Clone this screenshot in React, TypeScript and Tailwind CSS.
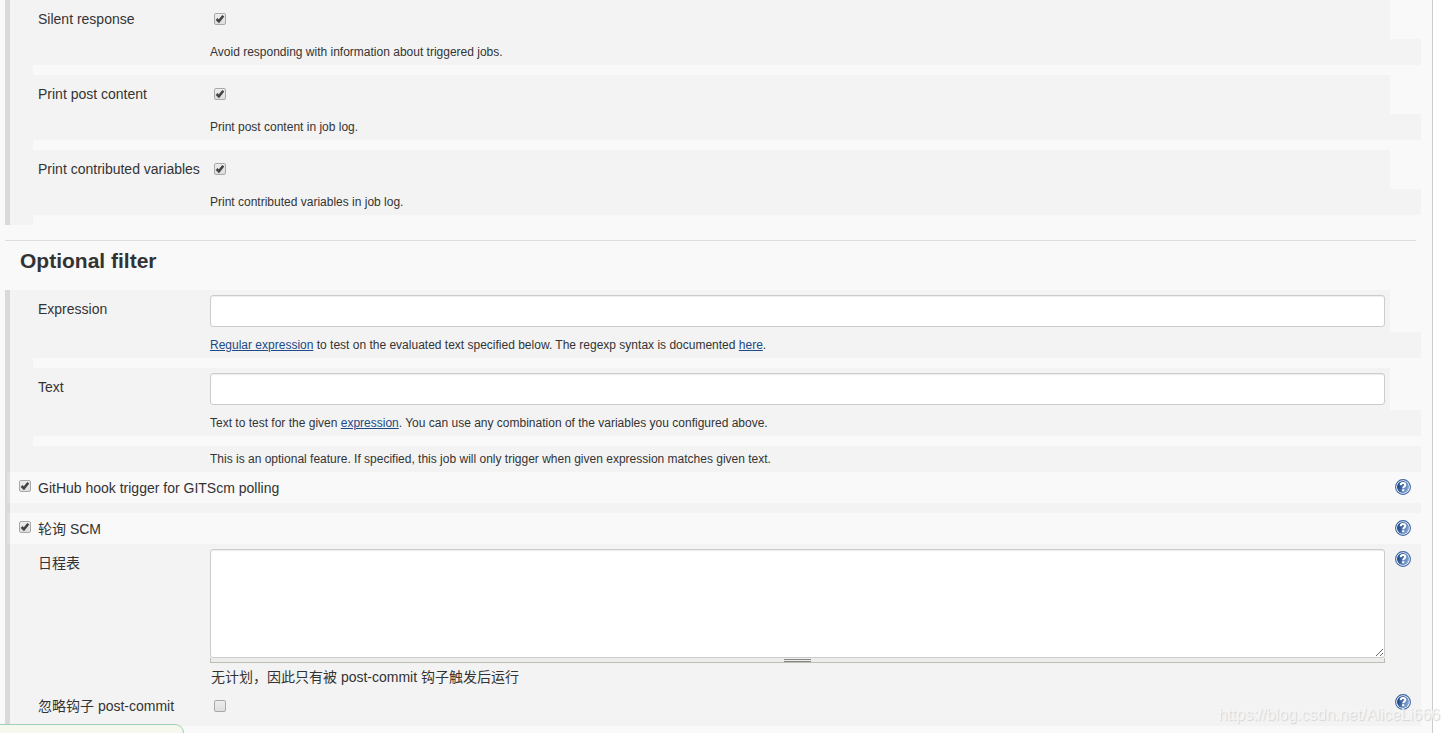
import { ReactNode, useId } from "react";

function HelpButton({ topic }: { topic: string }) {
  return (
    <button type="button" aria-label={`Help for ${topic}`} className="block size-4 cursor-pointer">
      <svg viewBox="0 0 16 16" className="size-4">
        <defs>
          <linearGradient id="help-fill" x1="0" y1="0.3" x2="1" y2="0.7">
            <stop offset="0.15" stopColor="#204a8c" />
            <stop offset="1" stopColor="#8fb0dc" />
          </linearGradient>
        </defs>
        <circle cx="8" cy="8" r="7.4" fill="#ffffff" stroke="#3a62a3" strokeWidth="1.1" />
        <circle cx="8" cy="8" r="6" fill="url(#help-fill)" />
        <path
          d="M5.7 6.2C5.7 4.7 6.6 3.9 8 3.9s2.3.8 2.3 2c0 1.6-2.1 1.6-2.1 3.4"
          fill="none"
          stroke="#ffffff"
          strokeWidth="2"
        />
        <rect x="7.1" y="10.2" width="2.2" height="2" fill="#ffffff" />
      </svg>
    </button>
  );
}

interface CheckboxProps {
  id: string;
  defaultChecked?: boolean;
}

function Checkbox({ id, defaultChecked }: CheckboxProps) {
  return (
    <span className="grid size-3 shrink-0">
      <input
        id={id}
        type="checkbox"
        defaultChecked={defaultChecked}
        className="peer col-start-1 row-start-1 size-3 appearance-none rounded-xs border border-[#a9a9a9] bg-linear-to-b from-[#ededed] to-[#dedede]"
      />
      <svg
        viewBox="0 0 12 12"
        className="pointer-events-none invisible col-start-1 row-start-1 size-3 peer-checked:visible"
      >
        <path d="M2.6 6l2.3 2.3L9.3 2.8" fill="none" stroke="#444444" strokeWidth="2.6" />
      </svg>
    </span>
  );
}

interface FieldRowProps {
  id: string;
  label: string;
  children: ReactNode;
}

function FieldRow({ id, label, children }: FieldRowProps) {
  return (
    <div className="mr-[31px] flex bg-[#f3f3f3] py-[5px] pr-[5px]">
      <label htmlFor={id} className="w-[177px] shrink-0 pt-1 pl-[5px] whitespace-nowrap">
        {label}
      </label>
      <div className="min-w-0 flex-1">{children}</div>
    </div>
  );
}

function Description({ children }: { children: ReactNode }) {
  return <p className="bg-[#f3f3f3] pt-1 pb-1 pl-[177px] text-xs leading-[18px]">{children}</p>;
}

function TextLink({ href, children }: { href: string; children: ReactNode }) {
  return (
    <a href={href} className="text-[#204a87] underline">
      {children}
    </a>
  );
}

function Spacer() {
  return <div className="h-[10px]" />;
}

interface CheckFieldProps {
  label: string;
  description: string;
}

function CheckField({ label, description }: CheckFieldProps) {
  const id = useId();
  return (
    <>
      <FieldRow id={id} label={label}>
        <div className="h-[29px] pt-2 pl-1">
          <Checkbox id={id} defaultChecked />
        </div>
      </FieldRow>
      <Description>{description}</Description>
      <Spacer />
    </>
  );
}

interface TextFieldProps {
  label: string;
  children: ReactNode;
}

function TextField({ label, children }: TextFieldProps) {
  const id = useId();
  return (
    <>
      <FieldRow id={id} label={label}>
        <input
          id={id}
          type="text"
          className="block h-8 w-full rounded-[3px] border border-[#cccccc] bg-white px-2 shadow-[inset_0_1px_1px_rgba(0,0,0,0.075)]"
        />
      </FieldRow>
      <Description>{children}</Description>
      <Spacer />
    </>
  );
}

function TriggerRow({ label }: { label: string }) {
  const id = useId();
  return (
    <div className="-ml-[3px] flex h-[31px] border-l-[3px] border-[#e0e0e0] bg-[#f9f9f9] pr-[10px] pl-[9px]">
      <div className="flex flex-1 gap-[7px]">
        <div className="pt-2">
          <Checkbox id={id} defaultChecked />
        </div>
        <label htmlFor={id} className="pt-[6px]">
          {label}
        </label>
      </div>
      <div className="pt-[7px]">
        <HelpButton topic={label} />
      </div>
    </div>
  );
}

function ScheduleFields() {
  return (
    <div className="bg-[#f3f3f3] pt-[5px] pr-[10px] pb-[10px] pl-7">
      <div className="flex">
        <label htmlFor="schedule" className="w-[172px] shrink-0 pt-1">
          日程表
        </label>
        <div className="min-w-0 flex-1">
          <textarea
            id="schedule"
            className="block h-[109px] w-full resize rounded-[3px] border border-[#cccccc] bg-white p-2 shadow-[inset_0_1px_1px_rgba(0,0,0,0.075)]"
          />
          <div className="flex h-[5px] items-end justify-center border border-t-0 border-[#bdbdb5] bg-[#ededed]">
            <div className="h-[3px] w-[27px] border-y border-[#888888]" />
          </div>
          <p className="pt-1 pl-px">无计划，因此只有被 post-commit 钩子触发后运行</p>
        </div>
        <div className="ml-[10px] pt-[2px]">
          <HelpButton topic="日程表" />
        </div>
      </div>
      <div className="flex pt-[5px]">
        <label htmlFor="ignore-hooks" className="w-[172px] shrink-0 pt-1">
          忽略钩子 post-commit
        </label>
        <div className="flex-1 pt-2 pl-1">
          <Checkbox id="ignore-hooks" />
        </div>
        <div className="pt-[2px]">
          <HelpButton topic="忽略钩子 post-commit" />
        </div>
      </div>
    </div>
  );
}

export default function App() {
  return (
    <div className="relative h-screen overflow-hidden bg-white pr-4 font-['Liberation_Sans','Noto_Sans_CJK_SC',sans-serif] text-sm leading-5 text-[#333333]">
      <main className="min-h-screen border-r border-[#cccccc] bg-[#f9f9f9] pr-[11px] pl-[5px]">
        <section className="border-l-[5px] border-[#d9d9d9]">
          <div className="border-l-[23px] border-[#f3f3f3]">
            <CheckField
              label="Silent response"
              description="Avoid responding with information about triggered jobs."
            />
            <CheckField label="Print post content" description="Print post content in job log." />
            <CheckField
              label="Print contributed variables"
              description="Print contributed variables in job log."
            />
          </div>
        </section>

        <h2 className="mt-[15px] mr-[5px] h-[50px] border-t border-[#dddddd] pt-2 pl-[15px] text-[21px] leading-6 font-bold">
          Optional filter
        </h2>

        <section className="border-l-[5px] border-[#d9d9d9]">
          <div className="border-l-[23px] border-[#f3f3f3]">
            <TextField label="Expression">
              <TextLink href="#regular-expression">Regular expression</TextLink> to test on the
              evaluated text specified below. The regexp syntax is documented{" "}
              <TextLink href="#syntax">here</TextLink>.
            </TextField>
            <TextField label="Text">
              Text to test for the given <TextLink href="#expression">expression</TextLink>. You can
              use any combination of the variables you configured above.
            </TextField>
            <Description>
              This is an optional feature. If specified, this job will only trigger when given
              expression matches given text.
            </Description>
          </div>
          <TriggerRow label="GitHub hook trigger for GITScm polling" />
          <div className="h-[10px] bg-[#f3f3f3]" />
          <TriggerRow label="轮询 SCM" />
          <ScheduleFields />
        </section>
      </main>

      {/* Top edge of the notification bubble */}
      <div className="absolute bottom-0 left-0 h-[9px] w-[184px] rounded-tr-[10px] border-t border-r border-[#a3cfb8] bg-[#f6f8f0]" />
      <div className="absolute right-[9px] bottom-2 text-base leading-5 text-[#f9f9f9]/80 [text-shadow:1px_1px_1px_#d4d4d4]">
        https://blog.csdn.net/AliceLi666
      </div>
    </div>
  );
}
